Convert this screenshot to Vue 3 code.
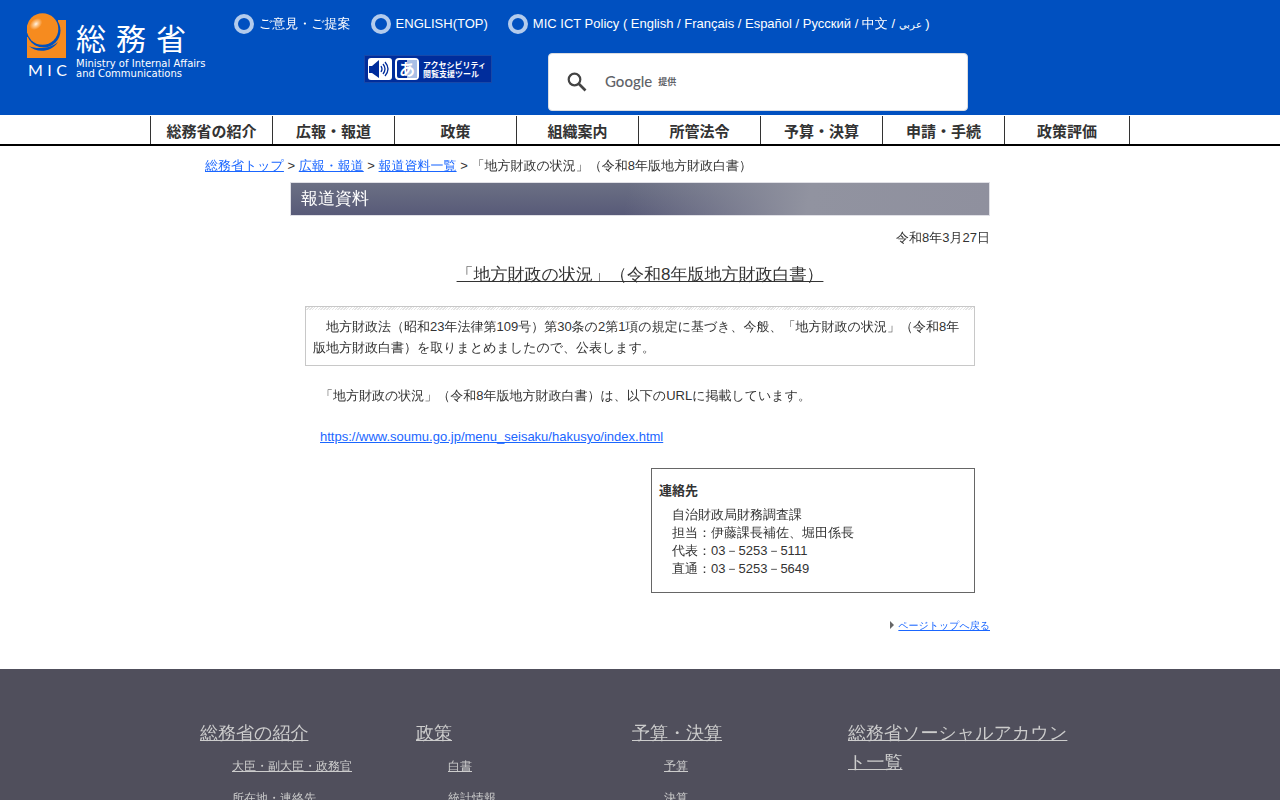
<template>
  <div class="page">
    <header class="site-header">
      <div class="header-inner">
        <a class="logo" href="#" aria-label="総務省">
          <span class="logo-mark">
            <svg width="40" height="45" viewBox="0 0 40 45" aria-hidden="true">
              <defs>
                <radialGradient id="shine" cx="0.5" cy="0.5" r="0.5">
                  <stop offset="0" stop-color="#fff4e6" />
                  <stop offset="0.4" stop-color="#fdc689" />
                  <stop offset="1" stop-color="#f68b1f" />
                </radialGradient>
              </defs>
              <rect y="7" width="39" height="38" fill="#f68b1f" />
              <path d="M0 0H28V7H31V24H0Z" fill="#0050c0" />
              <circle cx="16.500" cy="17.500" r="17" fill="#0050c0" />
              <path d="M0 28C5 36 13 37 19 35C10 35 5 32 0 26Z" fill="#f68b1f" />
              <path d="M2 33C9 40 24 40 31 29C25 35 10 37 2 33Z" fill="#0050c0" />
              <circle cx="15.500" cy="16" r="15.800" fill="#f68b1f" />
              <ellipse cx="9" cy="11" rx="7" ry="5" transform="rotate(-40 9 11)" fill="url(#shine)" />
            </svg>
            <span class="logo-mic"><span>M</span><span>I</span><span>C</span></span>
          </span>
          <span class="logo-text">
            <span class="logo-name"><span>総</span><span>務</span><span>省</span></span>
            <span class="logo-en">Ministry of Internal Affairs<br />and Communications</span>
          </span>
        </a>

        <div class="header-main">
          <ul class="header-links">
            <li><i class="ring"></i><a href="#">ご意見・ご提案</a></li>
            <li><i class="ring"></i><a href="#">ENGLISH(TOP)</a></li>
            <li>
              <i class="ring"></i>
              <a href="#">MIC ICT Policy ( English / Français / Español / Русский / 中文 / <bdi lang="ar">عربي</bdi> )</a>
            </li>
          </ul>
          <div class="header-tools">
            <a class="access-tool" href="#">
              <svg width="54" height="24" viewBox="0 0 54 24" aria-hidden="true">
                <rect x="0" y="1" width="24" height="22" rx="3" fill="#fff" />
                <path d="M1 9H4L11 3V21L4 16H1Z" fill="#002d9c" />
                <g fill="none" stroke="#002d9c" stroke-width="1.300">
                  <path d="M13 9Q15 12 13 15" />
                  <path d="M15 7Q19 12 15 17" />
                  <path d="M17 5Q23 12 17 19" />
                </g>
                <rect x="28" y="2" width="22" height="20" rx="3" fill="#002d9c" stroke="#fff" stroke-width="2" />
                <path d="M39 3H48Q49 3 49 4V20Q49 21 48 21H39Z" fill="#a9bfe6" />
                <text x="31" y="18" font-size="16" font-weight="700" fill="#fff">あ</text>
              </svg>
              <span>アクセシビリティ<br />閲覧支援ツール</span>
            </a>
            <form class="search" @submit.prevent>
              <button type="submit" aria-label="検索">
                <svg width="20" height="20" viewBox="0 0 20 20" fill="none" stroke="#444" aria-hidden="true">
                  <circle cx="7.500" cy="7.500" r="5.800" stroke-width="2.200" />
                  <path d="M11.500 11.500L18.500 18.500" stroke-width="2.600" />
                </svg>
              </button>
              <label for="q"><b>Google</b><small>提供</small></label>
              <input id="q" v-model="keyword" type="text" />
            </form>
          </div>
        </div>
      </div>
    </header>

    <nav class="global-nav">
      <ul>
        <li v-for="item in navItems" :key="item"><a href="#">{{ item }}</a></li>
      </ul>
    </nav>

    <p class="breadcrumb">
      <template v-for="item in crumbs" :key="item"><a href="#">{{ item }}</a> &gt; </template>「地方財政の状況」（令和8年版地方財政白書）
    </p>

    <main class="contents">
      <div class="title-bar">報道資料</div>
      <p class="date">令和8年3月27日</p>
      <h1>「地方財政の状況」（令和8年版地方財政白書）</h1>

      <div class="article">
        <p class="lead">　地方財政法（昭和23年法律第109号）第30条の2第1項の規定に基づき、今般、「地方財政の状況」（令和8年版地方財政白書）を取りまとめましたので、公表します。</p>
        <div class="body-text">
          <p>「地方財政の状況」（令和8年版地方財政白書）は、以下のURLに掲載しています。</p>
          <p><a href="#">https://www.soumu.go.jp/menu_seisaku/hakusyo/index.html</a></p>
        </div>
        <section class="contact">
          <h2>連絡先</h2>
          <p v-for="line in contact" :key="line">{{ line }}</p>
        </section>
      </div>

      <p class="page-top"><a href="#">ページトップへ戻る</a></p>
    </main>

    <footer class="site-footer">
      <div class="footer-inner">
        <section v-for="col in footerCols" :key="col.title">
          <h2><a href="#">{{ col.title }}</a></h2>
          <ul>
            <li v-for="item in col.items" :key="item"><a href="#">{{ item }}</a></li>
          </ul>
        </section>
      </div>
    </footer>
  </div>
</template>

<script setup>
import { ref } from "vue";

const keyword = ref("");

const navItems = [
  "総務省の紹介",
  "広報・報道",
  "政策",
  "組織案内",
  "所管法令",
  "予算・決算",
  "申請・手続",
  "政策評価",
];

const crumbs = ["総務省トップ", "広報・報道", "報道資料一覧"];

const contact = [
  "自治財政局財務調査課",
  "担当：伊藤課長補佐、堀田係長",
  "代表：03－5253－5111",
  "直通：03－5253－5649",
];

const footerCols = [
  { title: "総務省の紹介", items: ["大臣・副大臣・政務官", "所在地・連絡先"] },
  { title: "政策", items: ["白書", "統計情報"] },
  { title: "予算・決算", items: ["予算", "決算"] },
  { title: "総務省ソーシャルアカウント一覧", items: [] },
];
</script>

<style>
body {
  margin: 0;
  background: #fff;
}
</style>

<style scoped>
.page {
  font-family: "Liberation Sans", "WenQuanYi Zen Hei", "Noto Sans CJK JP", sans-serif;
  font-size: 13px;
  color: #333;
}

p,
h1,
h2,
ul {
  margin: 0;
  padding: 0;
}

ul {
  list-style: none;
}

a {
  color: #1a66ff;
}

.site-header {
  background: #0050c0;
}

.header-inner {
  display: flex;
  min-height: 115px;
}

.logo {
  display: flex;
  flex: none;
  gap: 9px;
  width: 207px;
  padding: 13px 0 0 27px;
  box-sizing: border-box;
  color: #fff;
  text-decoration: none;
}

.logo-mark svg {
  display: block;
}

.logo-mic {
  display: flex;
  justify-content: space-between;
  padding: 2px 0 0 1px;
  font-family: Lato, sans-serif;
  font-size: 16px;
  line-height: 20px;
}

.logo-text {
  white-space: nowrap;
}

.logo-name {
  display: flex;
  gap: 10px;
  margin-top: 7px;
  font-family: "Noto Sans CJK JP", sans-serif;
  font-size: 30px;
  line-height: 34px;
}

.logo-en {
  display: block;
  margin-top: 5px;
  font-family: "DejaVu Sans", sans-serif;
  font-size: 10px;
  line-height: 10px;
}

.header-main {
  flex: 1;
  padding: 14px 0 0 27px;
}

.header-links {
  display: flex;
  gap: 20px;
}

.header-links li {
  display: flex;
  gap: 5px;
  height: 20px;
  line-height: 20px;
  white-space: nowrap;
}

.header-links a {
  color: #fff;
  text-decoration: none;
}

.header-links bdi {
  font-size: 10px;
}

.ring {
  width: 20px;
  height: 20px;
  box-sizing: border-box;
  border: 4px solid #b3cbec;
  border-radius: 50%;
}

.header-tools {
  display: flex;
  align-items: flex-start;
  gap: 56px;
  padding: 19px 0 0 130px;
}

.access-tool {
  display: flex;
  align-items: center;
  gap: 1px;
  width: 128px;
  height: 28px;
  margin-top: 2px;
  padding-left: 3px;
  box-sizing: border-box;
  border: 1px solid #1848a8;
  background: #002d9c;
  color: #fff;
  font-family: "Noto Sans CJK JP", sans-serif;
  font-size: 8px;
  font-weight: 700;
  line-height: 9px;
  text-decoration: none;
  white-space: nowrap;
}

.access-tool svg {
  overflow: visible;
}

.search {
  display: flex;
  align-items: center;
  width: 420px;
  height: 58px;
  padding: 0 18px;
  box-sizing: border-box;
  border: 1px solid #dadce0;
  border-radius: 4px;
  background: #fff;
}

.search button {
  display: flex;
  padding: 0;
  border: none;
  background: none;
}

.search label {
  display: flex;
  align-items: center;
  gap: 6px;
  margin-left: 18px;
  padding-bottom: 2px;
  color: #5f6368;
}

.search b {
  font-family: Lato, sans-serif;
  font-size: 15px;
  font-weight: 500;
}

.search small {
  font-family: "Noto Sans CJK JP", sans-serif;
  font-size: 9px;
  font-weight: 700;
}

.search input {
  flex: 1;
  min-width: 0;
  border: none;
  outline: none;
  background: none;
}

.global-nav {
  padding-top: 1px;
  border-bottom: 2px solid #000;
}

.global-nav ul {
  display: grid;
  grid-template-columns: repeat(7, 122px) 1fr;
  max-width: 980px;
  margin: 0 auto;
  box-sizing: border-box;
  border-right: 1px solid #333;
}

.global-nav a {
  display: block;
  height: 28px;
  border-left: 1px solid #333;
  color: #333;
  font-family: "Liberation Sans", "Noto Sans CJK JP", sans-serif;
  font-size: 15px;
  font-weight: 700;
  line-height: 32px;
  text-align: center;
  text-decoration: none;
}

.breadcrumb {
  max-width: 870px;
  margin: 10px auto 6px;
  line-height: 20px;
}

.contents {
  max-width: 700px;
  margin: 0 auto;
}

.title-bar {
  padding: 0 10px;
  border: 1px solid #e0e0e6;
  background:
    linear-gradient(100deg, rgba(144, 146, 160, 0) 48%, #9193a0 74%, #8f909e 100%),
    linear-gradient(#6b7084, #585a78);
  color: #fff;
  font-size: 17px;
  line-height: 32px;
}

.date {
  margin-top: 12px;
  line-height: 20px;
  text-align: right;
}

h1 {
  margin-top: 15px;
  font-size: 17px;
  font-weight: 400;
  line-height: 24px;
  text-align: center;
  text-decoration: underline;
}

.article {
  padding: 0 15px;
}

.lead {
  margin-top: 19px;
  padding: 9px 7px 7px;
  border: 1px solid #c8c8c8;
  background: repeating-linear-gradient(135deg, #e4e4e4 0 1px, #fff 1px 2px) top / 100% 3px no-repeat;
  line-height: 21px;
}

.body-text {
  display: grid;
  gap: 20px;
  margin-top: 19px;
  padding: 0 15px;
  line-height: 21px;
}

.contact {
  width: 324px;
  margin: 21px 0 0 auto;
  padding: 12px 7px 14px;
  box-sizing: border-box;
  border: 1px solid #666;
}

.contact h2 {
  margin-bottom: 5px;
  font-family: "Liberation Sans", "Noto Sans CJK JP", sans-serif;
  font-size: 13px;
  line-height: 20px;
}

.contact p {
  padding-left: 13px;
  line-height: 18px;
}

.page-top {
  margin-top: 25px;
  font-size: 10px;
  line-height: 16px;
  text-align: right;
}

.page-top::before {
  content: "";
  display: inline-block;
  margin-right: 4px;
  border: solid transparent;
  border-width: 4px 0 4px 4px;
  border-left-color: #666;
}

.site-footer {
  margin-top: 35px;
  padding: 50px 0 20px;
  background: #504f5c;
}

.footer-inner {
  display: grid;
  grid-template-columns: repeat(3, 216px) 1fr;
  max-width: 880px;
  margin: 0 auto;
}

.site-footer a {
  color: #ccc;
}

.site-footer h2 {
  font-size: 18px;
  font-weight: 400;
  line-height: 29px;
}

.site-footer ul {
  padding-left: 32px;
}

.site-footer li {
  padding: 6px 0 2px;
  font-size: 12px;
  line-height: 24px;
}
</style>
